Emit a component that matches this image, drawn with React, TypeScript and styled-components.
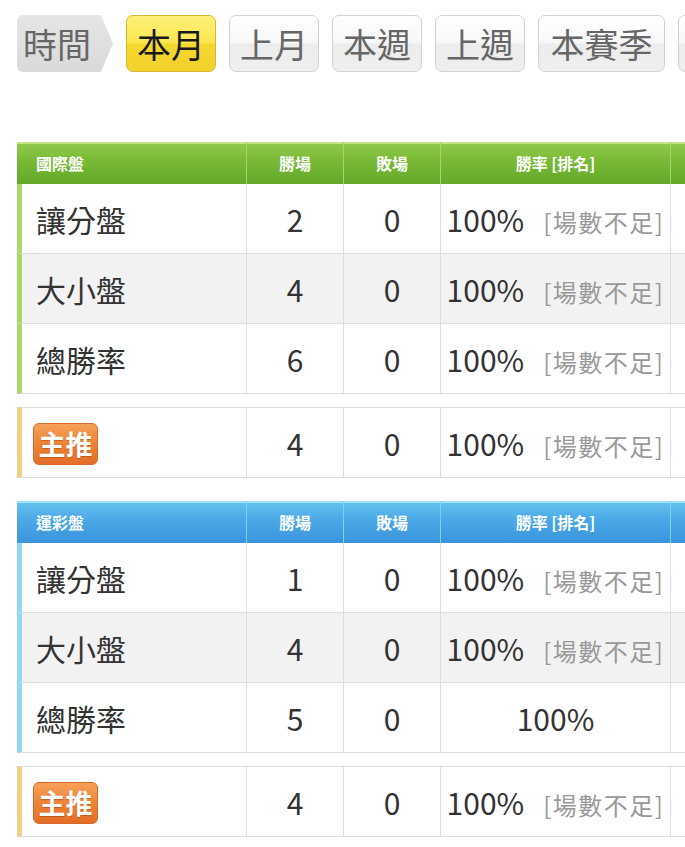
import styled, { createGlobalStyle, css } from "styled-components";

type Tone = "green" | "blue";

interface StatRow {
  label: string;
  win: number;
  lose: number;
  rate: string;
  note?: string;
}

interface Market {
  title: string;
  tone: Tone;
  rows: StatRow[];
  pick: StatRow;
}

const tabs = ["本月", "上月", "本週", "上週", "本賽季", "上賽季"];

const markets: Market[] = [
  {
    title: "國際盤",
    tone: "green",
    rows: [
      { label: "讓分盤", win: 2, lose: 0, rate: "100%", note: "[場數不足]" },
      { label: "大小盤", win: 4, lose: 0, rate: "100%", note: "[場數不足]" },
      { label: "總勝率", win: 6, lose: 0, rate: "100%", note: "[場數不足]" },
    ],
    pick: { label: "主推", win: 4, lose: 0, rate: "100%", note: "[場數不足]" },
  },
  {
    title: "運彩盤",
    tone: "blue",
    rows: [
      { label: "讓分盤", win: 1, lose: 0, rate: "100%", note: "[場數不足]" },
      { label: "大小盤", win: 4, lose: 0, rate: "100%", note: "[場數不足]" },
      { label: "總勝率", win: 5, lose: 0, rate: "100%" },
    ],
    pick: { label: "主推", win: 4, lose: 0, rate: "100%", note: "[場數不足]" },
  },
];

const accents: Record<Tone, string> = {
  green: "#a9d86a",
  blue: "#93d9f2",
};

// column widths shared by the stat table and the pick row
const Cols = () => (
  <colgroup>
    <col style={{ width: 229 }} />
    <col style={{ width: 97 }} />
    <col style={{ width: 97 }} />
    <col style={{ width: 230 }} />
    <col />
  </colgroup>
);

export default function App() {
  return (
    <>
      <GlobalStyle />
      <Page>
        <TabBar>
          <TimeLabel>時間</TimeLabel>
          {tabs.map((tab, i) => (
            <TabButton key={tab} $active={i === 0} $wide={tab.length > 2}>
              {tab}
            </TabButton>
          ))}
        </TabBar>

        {markets.map((market) => (
          <MarketBlock key={market.title}>
            <Table>
              <Cols />
              <thead>
                <HeadRow $tone={market.tone}>
                  <HeadCell $first>{market.title}</HeadCell>
                  <HeadCell>勝場</HeadCell>
                  <HeadCell>敗場</HeadCell>
                  <HeadCell>勝率 [排名]</HeadCell>
                  <HeadCell />
                </HeadRow>
              </thead>
              <tbody>
                {market.rows.map((row, i) => (
                  <BodyRow key={row.label} $alt={i === 1}>
                    <LabelCell $accent={accents[market.tone]}>
                      {row.label}
                    </LabelCell>
                    <Cell>{row.win}</Cell>
                    <Cell>{row.lose}</Cell>
                    <Cell>
                      {row.rate}
                      {row.note && <Note>{row.note}</Note>}
                    </Cell>
                    <Cell />
                  </BodyRow>
                ))}
              </tbody>
            </Table>

            <PickTable>
              <Cols />
              <tbody>
                <BodyRow $pick>
                  <LabelCell $accent="#f3cf85">
                    <PickBadge>{market.pick.label}</PickBadge>
                  </LabelCell>
                  <Cell>{market.pick.win}</Cell>
                  <Cell>{market.pick.lose}</Cell>
                  <Cell>
                    {market.pick.rate}
                    {market.pick.note && <Note>{market.pick.note}</Note>}
                  </Cell>
                  <Cell />
                </BodyRow>
              </tbody>
            </PickTable>
          </MarketBlock>
        ))}
      </Page>
    </>
  );
}

const GlobalStyle = createGlobalStyle`
  html, body {
    margin: 0;
    padding: 0;
    background: #fff;
    overflow: hidden;
  }
  body {
    font-family: "Noto Sans CJK TC", "Noto Sans", sans-serif;
    color: #333;
  }
`;

const Page = styled.div`
  width: 685px;
  padding: 15px 0 0 17px;
  box-sizing: border-box;
  overflow: hidden;
`;

const TabBar = styled.div`
  display: flex;
  align-items: center;
  gap: 13px;
  height: 57px;
  white-space: nowrap;
`;

const TimeLabel = styled.div`
  flex: none;
  width: 96px;
  height: 57px;
  box-sizing: border-box;
  padding-left: 6px;
  display: flex;
  align-items: center;
  font-size: 34px;
  line-height: 1;
  color: #666;
  background: linear-gradient(#e6e6e6, #d9d9d9);
  border-radius: 6px 0 0 6px;
  clip-path: polygon(0 0, 84px 0, 96px 50%, 84px 100%, 0 100%);
`;

const TabButton = styled.div<{ $active?: boolean; $wide?: boolean }>`
  flex: none;
  height: 57px;
  box-sizing: border-box;
  padding: 0 ${(p) => (p.$wide ? "11.5px" : "10px")};
  display: flex;
  align-items: center;
  font-size: 34px;
  line-height: 1;
  border-radius: 7px;
  ${(p) =>
    p.$active
      ? css`
          color: #1a1a1a;
          border: 1px solid #d6b535;
          background: linear-gradient(#fdf07a 0%, #fbe650 48%, #f4d72f 52%, #f2d22c 100%);
        `
      : css`
          color: #666;
          border: 1px solid #d2d2d2;
          background: linear-gradient(#ffffff 0%, #f7f7f7 48%, #ececec 52%, #efefef 100%);
        `}
`;

const MarketBlock = styled.section`
  margin-top: 70px;
  & + & {
    margin-top: 23px;
  }
`;

const Table = styled.table`
  width: 760px;
  table-layout: fixed;
  border-collapse: separate;
  border-spacing: 0;
`;

const PickTable = styled(Table)`
  margin-top: 13px;
  td {
    border-top: 1px solid #dedede;
  }
`;

const headTones: Record<Tone, ReturnType<typeof css>> = {
  green: css`
    background: linear-gradient(#93cb4c 0%, #78b935 45%, #64a92a 100%);
    box-shadow: inset 0 2px 0 #c2e684;
  `,
  blue: css`
    background: linear-gradient(#66c3f0 0%, #4aa8e6 45%, #3a94dc 100%);
    box-shadow: inset 0 2px 0 #9fe2fa;
  `,
};

const HeadRow = styled.tr<{ $tone: Tone }>`
  height: 42px;
  ${(p) => headTones[p.$tone]}
  & > th + th {
    border-left: 1px solid
      ${(p) => (p.$tone === "green" ? "#a5d46c" : "#86cdf3")};
  }
`;

const HeadCell = styled.th<{ $first?: boolean }>`
  padding: 0;
  font-size: 16px;
  font-weight: 700;
  color: #fff;
  text-align: ${(p) => (p.$first ? "left" : "center")};
  padding-left: ${(p) => (p.$first ? "19px" : "0")};
  vertical-align: middle;
`;

const BodyRow = styled.tr<{ $alt?: boolean; $pick?: boolean }>`
  height: ${(p) => (p.$pick ? "71px" : "70px")};
  background: ${(p) => (p.$alt ? "#f2f2f2" : "#fff")};
`;

const Cell = styled.td`
  padding: 0;
  font-size: 30px;
  color: #333;
  text-align: center;
  vertical-align: middle;
  white-space: nowrap;
  border-left: 1px solid #dedede;
  border-bottom: 1px solid #dedede;
`;

const LabelCell = styled.td<{ $accent: string }>`
  padding: 0 0 0 14px;
  font-size: 30px;
  color: #333;
  text-align: left;
  vertical-align: middle;
  border-left: 5px solid ${(p) => p.$accent};
  border-bottom: 1px solid #dedede;
`;

const Note = styled.span`
  margin-left: 19px;
  font-size: 24px;
  letter-spacing: 1.5px;
  color: #999;
`;

const PickBadge = styled.span`
  display: inline-flex;
  align-items: center;
  justify-content: center;
  width: 65px;
  height: 42px;
  box-sizing: border-box;
  margin-left: -3px;
  border-radius: 6px;
  border: 1px solid #d9692a;
  background: linear-gradient(#f6a159 0%, #ee8437 50%, #e46d27 100%);
  color: #fff;
  font-size: 27px;
  font-weight: 700;
  line-height: 1;
  text-shadow: 0 1px 1px rgba(150, 60, 10, 0.5);
`;
